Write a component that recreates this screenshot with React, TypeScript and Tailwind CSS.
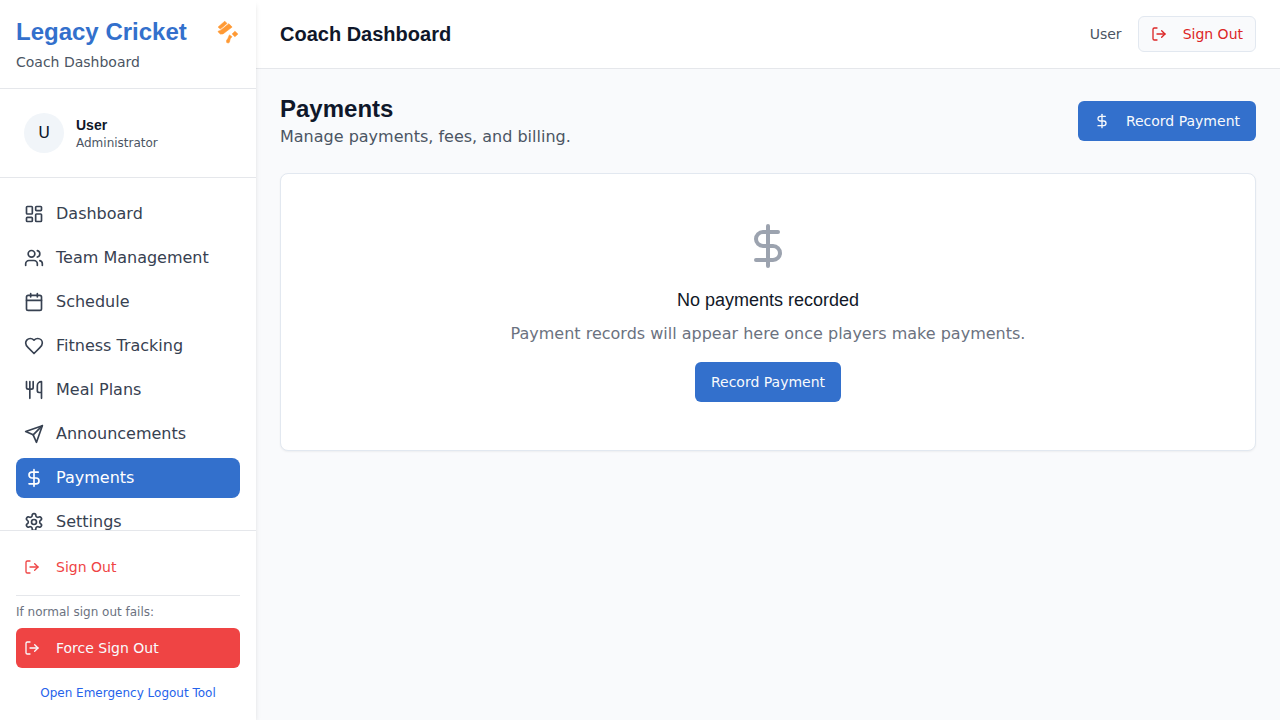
import type { ComponentType } from "react";
import { Calendar, DollarSign, LayoutDashboard, LogOut, Users, Utensils } from "lucide-react";

type IconProps = { className?: string };

function Heart({ className }: IconProps) {
  return (
    <svg viewBox="0 0 24 24" fill="none" stroke="currentColor" strokeWidth="2" strokeLinecap="round" strokeLinejoin="round" className={className}>
      <path d="M19 14c1.49-1.46 3-3.21 3-5.5A5.5 5.5 0 0 0 16.5 3c-1.76 0-3 .5-4.5 2-1.5-1.5-2.74-2-4.5-2A5.5 5.5 0 0 0 2 8.5c0 2.3 1.5 4.05 3 5.5l7 7Z" />
    </svg>
  );
}

function Send({ className }: IconProps) {
  return (
    <svg viewBox="0 0 24 24" fill="none" stroke="currentColor" strokeWidth="2" strokeLinecap="round" strokeLinejoin="round" className={className}>
      <path d="m22 2-7 20-4-9-9-4Z" />
      <path d="M22 2 11 13" />
    </svg>
  );
}

function Settings({ className }: IconProps) {
  return (
    <svg viewBox="0 0 24 24" fill="none" stroke="currentColor" strokeWidth="2" strokeLinecap="round" strokeLinejoin="round" className={className}>
      <path d="M12.22 2h-.44a2 2 0 0 0-2 2v.18a2 2 0 0 1-1 1.73l-.43.25a2 2 0 0 1-2 0l-.15-.08a2 2 0 0 0-2.73.73l-.22.38a2 2 0 0 0 .73 2.73l.15.1a2 2 0 0 1 1 1.72v.51a2 2 0 0 1-1 1.74l-.15.09a2 2 0 0 0-.73 2.73l.22.38a2 2 0 0 0 2.73.73l.15-.08a2 2 0 0 1 2 0l.43.25a2 2 0 0 1 1 1.73V20a2 2 0 0 0 2 2h.44a2 2 0 0 0 2-2v-.18a2 2 0 0 1 1-1.73l.43-.25a2 2 0 0 1 2 0l.15.08a2 2 0 0 0 2.73-.73l.22-.39a2 2 0 0 0-.73-2.73l-.15-.08a2 2 0 0 1-1-1.74v-.5a2 2 0 0 1 1-1.74l.15-.09a2 2 0 0 0 .73-2.73l-.22-.38a2 2 0 0 0-2.73-.73l-.15.08a2 2 0 0 1-2 0l-.43-.25a2 2 0 0 1-1-1.73V4a2 2 0 0 0-2-2z" />
      <circle cx="12" cy="12" r="3" />
    </svg>
  );
}

function CricketLogo({ className }: IconProps) {
  return (
    <svg viewBox="0 0 24 24" fill="currentColor" stroke="currentColor" strokeWidth="0.6" strokeLinejoin="round" className={className}>
      <path d="M8.8 1.2 11 3.5 4.4 9.1 2.1 7.1Z" />
      <path d="M12.9 3.7 16.1 7.1 7 13.9 4.4 14.1 2.2 12 2.2 11.2 4.4 10.5Z" />
      <path d="M18.9 11.2 21.9 14.1 18.9 16.7 16.2 14Z" />
      <path d="M13.4 14.9 16 16.7 14.2 18.8 13.4 22.3 12.2 23 10.7 22.5 10.5 20.6 11.9 18.5Z" />
    </svg>
  );
}

const navItems: { label: string; icon: ComponentType<IconProps>; active?: boolean }[] = [
  { label: "Dashboard", icon: LayoutDashboard },
  { label: "Team Management", icon: Users },
  { label: "Schedule", icon: Calendar },
  { label: "Fitness Tracking", icon: Heart },
  { label: "Meal Plans", icon: Utensils },
  { label: "Announcements", icon: Send },
  { label: "Payments", icon: DollarSign, active: true },
  { label: "Settings", icon: Settings },
];

function Sidebar() {
  return (
    <aside className="z-10 flex h-full w-64 shrink-0 flex-col bg-white shadow-md">
      <div className="border-b border-[#e5e7eb] p-4">
        <div className="flex items-center justify-between">
          <h1 className="font-['Liberation_Sans',sans-serif] text-2xl font-bold text-[#3370cc]">Legacy Cricket</h1>
          <CricketLogo className="size-6 text-[#ff9933]" />
        </div>
        <p className="mt-1 text-sm text-[#4b5563]">Coach Dashboard</p>
      </div>

      <div className="flex items-center gap-3 border-b border-[#e5e7eb] p-6">
        <div className="flex size-10 items-center justify-center rounded-full bg-[#f1f5f9] text-[#0f172a]">U</div>
        <div>
          <h3 className="font-['Liberation_Sans',sans-serif] text-sm font-bold text-[#0f172a]">User</h3>
          <p className="text-xs text-[#4b5563]">Administrator</p>
        </div>
      </div>

      <nav className="min-h-0 flex-1 space-y-1 overflow-hidden p-4">
        {navItems.map(({ label, icon: Icon, active }) => (
          <a
            key={label}
            className={
              active
                ? "flex h-10 items-center gap-3 rounded-lg bg-[#3370cc] px-2 text-white"
                : "flex h-10 items-center gap-3 rounded-lg px-2 text-[#374151]"
            }
          >
            <Icon className="size-5" />
            <span>{label}</span>
          </a>
        ))}
      </nav>

      <div className="border-t border-[#e5e7eb] p-4">
        <button className="flex h-10 w-full items-center gap-4 rounded-md px-2 text-sm text-[#ef4444]">
          <LogOut className="size-4" />
          Sign Out
        </button>
        <div className="mt-2 border-t border-[#e5e7eb] pt-2">
          <p className="mb-2 text-xs text-[#6b7280]">If normal sign out fails:</p>
          <button className="flex h-10 w-full items-center gap-4 rounded-md bg-[#ef4444] px-2 text-sm text-[#f8fafc]">
            <LogOut className="size-4" />
            Force Sign Out
          </button>
          <div className="mt-3 text-center">
            <a className="text-xs text-[#2563eb]">Open Emergency Logout Tool</a>
          </div>
        </div>
      </div>
    </aside>
  );
}

export default function App() {
  return (
    <div className="flex h-screen overflow-hidden bg-[#f9fafc] font-['DejaVu_Sans',sans-serif] text-base text-[#0f172a]">
      <Sidebar />
      <div className="flex min-w-0 flex-1 flex-col">
        <header className="flex items-center justify-between border-b border-[#e5e7eb] bg-white px-6 py-4">
          <h1 className="font-['Liberation_Sans',sans-serif] text-xl font-bold">Coach Dashboard</h1>
          <div className="flex items-center gap-4">
            <span className="text-sm text-[#4b5563]">User</span>
            <button className="flex h-9 items-center gap-4 rounded-md border border-[#e2e8f0] bg-[#f9fafc] px-3 text-sm text-[#dc2626]">
              <LogOut className="size-4" />
              Sign Out
            </button>
          </div>
        </header>

        <main className="flex flex-col gap-6 p-6">
          <div className="flex items-center justify-between">
            <div>
              <h1 className="font-['Liberation_Sans',sans-serif] text-2xl font-bold">Payments</h1>
              <p className="text-[#4b5563]">Manage payments, fees, and billing.</p>
            </div>
            <button className="flex h-10 items-center gap-4 rounded-md bg-[#3370cc] px-4 text-sm text-[#f8fafc]">
              <DollarSign className="size-4" />
              Record Payment
            </button>
          </div>

          <section className="flex flex-col items-center rounded-lg border border-[#e2e8f0] bg-white p-12 shadow-xs">
            <DollarSign className="size-12 text-[#9ca3af]" />
            <h3 className="mt-4 mb-2 font-['Liberation_Sans',sans-serif] text-lg font-medium text-[#111827]">No payments recorded</h3>
            <p className="mb-4 text-[#6b7280]">Payment records will appear here once players make payments.</p>
            <button className="h-10 rounded-md bg-[#3370cc] px-4 text-sm text-[#f8fafc]">Record Payment</button>
          </section>
        </main>
      </div>
    </div>
  );
}
